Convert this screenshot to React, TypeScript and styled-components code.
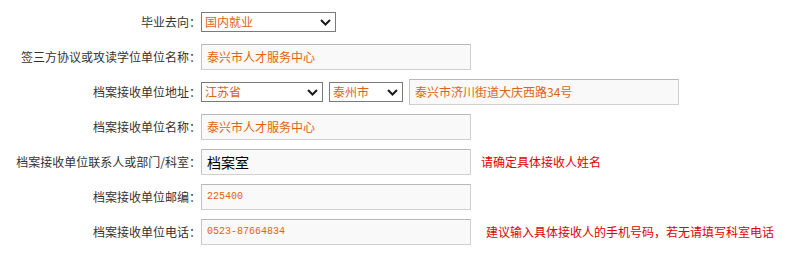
import React from "react";
import styled, { createGlobalStyle } from "styled-components";

const Global = createGlobalStyle`
  html, body { margin: 0; padding: 0; background: #fff; }
  body { font-family: "Noto Sans CJK SC", "Liberation Sans", sans-serif; font-size: 12px; }
`;

const Form = styled.div`
  display: grid;
  grid-template-columns: 201px 1fr;
  grid-auto-rows: 35px;
  align-items: center;
  padding-top: 4px;
  width: 806px;
`;

const Label = styled.div`
  text-align: right;
  color: #333;
  font-size: 12px;
  line-height: 16px;
  white-space: nowrap;
`;

const Field = styled.div`
  display: flex;
  align-items: center;
  gap: 6px;
`;

const SelectWrap = styled.div<{ $w: number }>`
  position: relative;
  width: ${(p) => p.$w}px;
  height: 20px;
`;

const Select = styled.select`
  appearance: none;
  -webkit-appearance: none;
  box-sizing: border-box;
  width: 100%;
  height: 100%;
  border: 1px solid #7a7a7a;
  border-radius: 0;
  background: #fff;
  color: #e0640f;
  font-family: "Noto Sans CJK SC", sans-serif;
  font-size: 12px;
  line-height: 18px;
  padding: 0 0 0 3px;
  margin: 0;
  outline: none;
`;

const Chevron = styled.svg`
  position: absolute;
  right: 5px;
  top: 7px;
  pointer-events: none;
`;

const Input = styled.input<{ $big?: boolean; $mono?: boolean }>`
  box-sizing: border-box;
  width: 270px;
  height: 26px;
  margin: 0;
  border: 1px solid #d0d0d0;
  border-top-color: #b8b8b8;
  border-left-color: #c4c4c4;
  background: #f9f9f9;
  padding: 0 5px;
  color: ${(p) => (p.$big ? "#000" : "#e0640f")};
  font-family: ${(p) =>
    p.$mono ? '"Liberation Mono", monospace' : '"Noto Sans CJK SC", sans-serif'};
  font-size: ${(p) => (p.$big ? "14px" : p.$mono ? "10px" : "12px")};
  outline: none;
`;

const Hint = styled.span<{ $indent?: number }>`
  color: #e00000;
  font-size: 12px;
  margin-left: ${(p) => p.$indent ?? 4}px;
  white-space: nowrap;
`;

const Dropdown = ({ w, value }: { w: number; value: string }) => (
  <SelectWrap $w={w}>
    <Select defaultValue={value}>
      <option value={value}>{value}</option>
    </Select>
    <Chevron width="11" height="7" viewBox="0 0 11 7">
      <path d="M1 1 L5.5 5.5 L10 1" fill="none" stroke="#1a1a1a" strokeWidth="2" />
    </Chevron>
  </SelectWrap>
);

export default function App() {
  return (
    <>
      <Global />
      <Form>
        <Label>毕业去向：</Label>
        <Field>
          <Dropdown w={135} value="国内就业" />
        </Field>

        <Label>签三方协议或攻读学位单位名称：</Label>
        <Field>
          <Input defaultValue="泰兴市人才服务中心" />
        </Field>

        <Label>档案接收单位地址：</Label>
        <Field>
          <Dropdown w={122} value="江苏省" />
          <Dropdown w={74} value="泰州市" />
          <Input defaultValue="泰兴市济川街道大庆西路34号" />
        </Field>

        <Label>档案接收单位名称：</Label>
        <Field>
          <Input defaultValue="泰兴市人才服务中心" />
        </Field>

        <Label>档案接收单位联系人或部门/科室：</Label>
        <Field>
          <Input $big defaultValue="档案室" />
          <Hint $indent={4}>请确定具体接收人姓名</Hint>
        </Field>

        <Label>档案接收单位邮编：</Label>
        <Field>
          <Input $mono defaultValue="225400" />
        </Field>

        <Label>档案接收单位电话：</Label>
        <Field>
          <Input $mono defaultValue="0523-87664834" />
          <Hint $indent={9}>建议输入具体接收人的手机号码，若无请填写科室电话</Hint>
        </Field>
      </Form>
    </>
  );
}
